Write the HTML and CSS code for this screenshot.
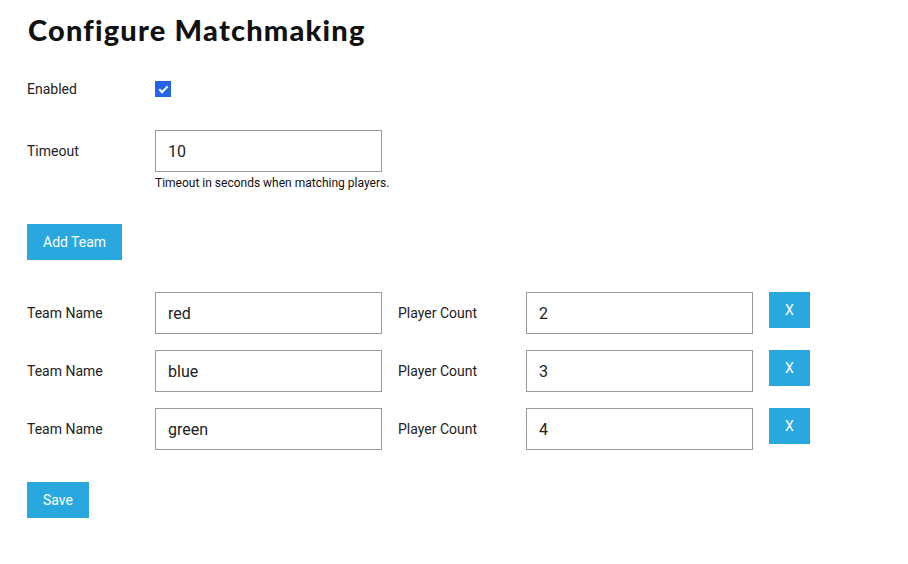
FILE: index.html
```html
<!DOCTYPE html>
<html lang="en">
<head>
    <meta charset="UTF-8">
    <meta name="viewport" content="width=device-width, initial-scale=1.0">
    <title>Configure Matchmaking</title>
    <link rel="stylesheet" href="styles.css">
</head>
<body>
    <div class="page">
        <h1 class="title">Configure Matchmaking</h1>

        <div class="field-row enabled-row">
            <label class="field-label" for="enabled">Enabled</label>
            <input class="checkbox" type="checkbox" id="enabled" checked>
        </div>

        <div class="field-row timeout-row">
            <label class="field-label" for="timeout">Timeout</label>
            <div class="field-control">
                <input class="text-input" type="text" id="timeout" value="10">
                <div class="help-text">Timeout in seconds when matching players.</div>
            </div>
        </div>

        <button class="btn add-team">Add Team</button>

        <div class="team-list">
            <div class="team-row">
                <label class="field-label">Team Name</label>
                <input class="text-input" type="text" value="red">
                <label class="field-label count-label">Player Count</label>
                <input class="text-input" type="text" value="2">
                <button class="btn remove">X</button>
            </div>
            <div class="team-row">
                <label class="field-label">Team Name</label>
                <input class="text-input" type="text" value="blue">
                <label class="field-label count-label">Player Count</label>
                <input class="text-input" type="text" value="3">
                <button class="btn remove">X</button>
            </div>
            <div class="team-row">
                <label class="field-label">Team Name</label>
                <input class="text-input" type="text" value="green">
                <label class="field-label count-label">Player Count</label>
                <input class="text-input" type="text" value="4">
                <button class="btn remove">X</button>
            </div>
        </div>

        <button class="btn save">Save</button>
    </div>
</body>
</html>
```

FILE: styles.css
```css
* {
    margin: 0;
    padding: 0;
    box-sizing: border-box;
}

body {
    font-family: Roboto, 'Liberation Sans', sans-serif;
    font-size: 14px;
    color: #1a1a1a;
    background: #fff;
    width: 908px;
    height: 564px;
    overflow: hidden;
}

.page {
    padding: 13px 27px 0;
    display: flex;
    flex-direction: column;
    align-items: flex-start;
}

.title {
    font-family: Lato, 'Open Sans', sans-serif;
    font-size: 29px;
    font-weight: 900;
    letter-spacing: 1.2px;
    color: #111;
    line-height: 34px;
    margin-left: 1px;
}

.field-row {
    display: flex;
    align-items: flex-start;
}

.field-label {
    width: 128px;
    flex-shrink: 0;
    color: #222;
}

.enabled-row {
    margin-top: 34px;
    align-items: center;
    height: 16px;
}

.checkbox {
    appearance: none;
    -webkit-appearance: none;
    width: 16px;
    height: 16px;
    margin: 0;
    background: #2563eb;
    display: inline-flex;
    align-items: center;
    justify-content: center;
}

.checkbox:checked::after {
    content: '';
    width: 7px;
    height: 3px;
    border-left: 2px solid #fff;
    border-bottom: 2px solid #fff;
    transform: translateY(-1px) rotate(-45deg);
}

.timeout-row {
    margin-top: 33px;
}

.timeout-row .field-label {
    line-height: 42px;
}

.text-input {
    width: 227px;
    height: 42px;
    border: 1px solid #9a9a9a;
    border-radius: 0;
    padding: 0 12px;
    font-family: Roboto, 'Liberation Sans', sans-serif;
    font-size: 16px;
    color: #222;
    background: #fff;
    outline: none;
}

.help-text {
    font-size: 12px;
    margin-top: 4px;
    color: #111;
}

.btn {
    background: #29a8e0;
    color: #fff;
    border: none;
    border-radius: 0;
    font-family: Roboto, 'Liberation Sans', sans-serif;
    font-size: 14px;
    height: 36px;
    padding: 0 16px;
    cursor: pointer;
}

.add-team {
    margin-top: 34px;
}

.team-list {
    margin-top: 32px;
    display: flex;
    flex-direction: column;
    gap: 16px;
}

.team-row {
    display: flex;
    align-items: flex-start;
}

.team-row .field-label {
    line-height: 42px;
}

.count-label {
    margin-left: 16px;
}

.remove {
    width: 41px;
    padding: 0;
    margin-left: 16px;
}

.save {
    margin-top: 32px;
}
```
